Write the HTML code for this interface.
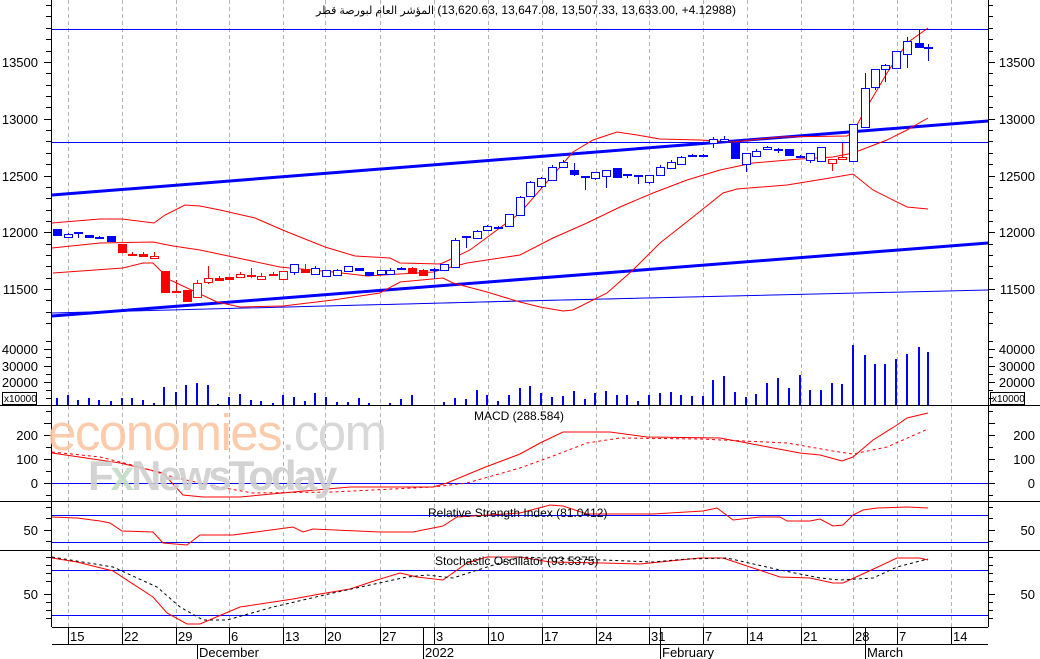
<!DOCTYPE html>
<html><head><meta charset="utf-8"><style>
html,body{margin:0;padding:0;background:#fff;}
body{width:1040px;height:659px;overflow:hidden;position:relative;font-family:"Liberation Sans","Noto Sans CJK SC",sans-serif;}
svg{position:absolute;left:0;top:0;}
.wm{position:absolute;font-family:"Liberation Sans",sans-serif;white-space:nowrap;}
</style></head><body>
<svg width="1040" height="659" viewBox="0 0 1040 659" font-family="Liberation Sans, sans-serif">
<g stroke="#b4b4b4" stroke-dasharray="4,3" stroke-width="1">
<path d="M68.5 0V627M122.5 0V627M176.5 0V627M229.5 0V627M283.5 0V627M325.5 0V627M380.5 0V627M434.5 0V627M488.5 0V627M542.5 0V627M596.5 0V627M649.5 0V627M703.5 0V627M747.5 0V627M801.5 0V627M853.5 0V627M897.5 0V627M951.5 0V627"/>
</g>
<g stroke="#0000ff" stroke-width="1">
<path d="M52 29.5H988M52 142.5H988"/>
<path d="M52 313L520 301L988 290"/>
<path d="M52 483.5H988M52 515.5H988M52 542.5H988M52 570.5H988M52 615.5H988"/>
</g>
<g stroke="#0000ff" stroke-width="3">
<path d="M52 195L988 121"/>
<path d="M52 316L988 243"/>
</g>
<g fill="none" stroke="#ff0000" stroke-width="1">
<polyline points="52,223 100,219 122,219 154,223 165,215 185,205 200,206 220,210 255,218 285,231 325,247 355,256 390,258 400,263 440,264 445,262 470,250 520,213 573,152 593,140 617,132 637,135 660,139 700,140 733,142 780,137 847,136 853,132 867,107 887,73 907,43 928,28"/>
<polyline points="52,248 100,243 153,242 173,246 200,250 233,257 280,267 333,272 367,276 433,272 467,263 520,255 553,238 587,223 620,207 653,193 687,180 720,170 753,163 800,159 833,157 853,153 887,140 907,130 928,118"/>
<polyline points="53,273 123,268 143,263 153,263 170,280 217,302 240,307 283,306 333,300 380,293 400,282 443,278 453,283 487,292 520,302 540,307 563,311 573,310 607,293 633,270 660,243 693,217 723,193 737,189 787,185 830,178 853,174 873,190 907,207 928,209"/>
</g>
<g stroke-width="1" shape-rendering="crispEdges">
<g stroke="#0000ff" fill="#0000ff">
<path d="M57.5 229V235M68.5 233V238M78.5 232V238M89.5 235V237M99.5 236V238M111.5 236V241M294.5 264V275M315.5 266V274M326.5 270V277M337.5 269V276M348.5 266V271M359.5 268V270M369.5 272V275M381.5 270V275M390.5 268V274M401.5 267V269M434.5 268V279M444.5 264V270M455.5 238V268M466.5 236V248M477.5 230V239M487.5 225V231M498.5 226V228M509.5 214V227M520.5 196V216M530.5 181V197M541.5 177V188M552.5 165V181M563.5 160V168M574.5 163V176M585.5 176V190M595.5 172V180M606.5 170V188M617.5 168V177M627.5 174V178M638.5 175V184M649.5 175V184M660.5 165V176M671.5 160V169M681.5 156V165M692.5 154V156M703.5 154V156M713.5 137V148M724.5 136V143M735.5 143V159M746.5 153V172M756.5 149V157M767.5 146V150M778.5 148V153M789.5 149V155M800.5 155V157M810.5 153V163M821.5 147V162M853.5 124V162M865.5 73V128M875.5 69V90M885.5 64V82M896.5 51V69M907.5 37V68M919.5 29V47M928.5 44V61" fill="none"/>
<rect x="53.5" y="229.5" width="8" height="6"/>
<rect x="74.5" y="232.5" width="8" height="1"/>
<rect x="85.5" y="235.5" width="8" height="2"/>
<rect x="95.5" y="237.5" width="8" height="1"/>
<rect x="107.5" y="236.5" width="8" height="5"/>
<rect x="355.5" y="268.5" width="8" height="2"/>
<rect x="365.5" y="272.5" width="8" height="3"/>
<rect x="397.5" y="268.5" width="8" height="1"/>
<rect x="430.5" y="269.5" width="8" height="1"/>
<rect x="462.5" y="236.5" width="8" height="1"/>
<rect x="494.5" y="227.5" width="8" height="1"/>
<rect x="570.5" y="170.5" width="8" height="4"/>
<rect x="581.5" y="176.5" width="8" height="1"/>
<rect x="613.5" y="168.5" width="8" height="9"/>
<rect x="623.5" y="174.5" width="8" height="1"/>
<rect x="634.5" y="175.5" width="8" height="1"/>
<rect x="688.5" y="155.5" width="8" height="1"/>
<rect x="699.5" y="155.5" width="8" height="1"/>
<rect x="731.5" y="143.5" width="8" height="15"/>
<rect x="774.5" y="149.5" width="8" height="1"/>
<rect x="785.5" y="149.5" width="8" height="6"/>
<rect x="796.5" y="156.5" width="8" height="1"/>
<rect x="915.5" y="43.5" width="8" height="4"/>
<rect x="924.5" y="47.5" width="8" height="1"/>
</g>
<g stroke="#0000ff" fill="#fff">
<rect x="64.5" y="234.5" width="8" height="3"/>
<rect x="290.5" y="264.5" width="8" height="8"/>
<rect x="311.5" y="268.5" width="8" height="6"/>
<rect x="322.5" y="270.5" width="8" height="6"/>
<rect x="333.5" y="270.5" width="8" height="5"/>
<rect x="344.5" y="266.5" width="8" height="5"/>
<rect x="377.5" y="270.5" width="8" height="4"/>
<rect x="386.5" y="270.5" width="8" height="4"/>
<rect x="440.5" y="264.5" width="8" height="6"/>
<rect x="451.5" y="240.5" width="8" height="27"/>
<rect x="473.5" y="231.5" width="8" height="7"/>
<rect x="483.5" y="226.5" width="8" height="4"/>
<rect x="505.5" y="214.5" width="8" height="12"/>
<rect x="516.5" y="197.5" width="8" height="18"/>
<rect x="526.5" y="182.5" width="8" height="14"/>
<rect x="537.5" y="178.5" width="8" height="8"/>
<rect x="548.5" y="167.5" width="8" height="13"/>
<rect x="559.5" y="162.5" width="8" height="5"/>
<rect x="591.5" y="172.5" width="8" height="6"/>
<rect x="602.5" y="170.5" width="8" height="6"/>
<rect x="645.5" y="175.5" width="8" height="7"/>
<rect x="656.5" y="167.5" width="8" height="8"/>
<rect x="667.5" y="162.5" width="8" height="6"/>
<rect x="677.5" y="157.5" width="8" height="7"/>
<rect x="709.5" y="139.5" width="8" height="4"/>
<rect x="720.5" y="139.5" width="8" height="2"/>
<rect x="742.5" y="153.5" width="8" height="11"/>
<rect x="752.5" y="151.5" width="8" height="5"/>
<rect x="763.5" y="147.5" width="8" height="2"/>
<rect x="806.5" y="153.5" width="8" height="7"/>
<rect x="817.5" y="147.5" width="8" height="14"/>
<rect x="849.5" y="124.5" width="8" height="37"/>
<rect x="861.5" y="88.5" width="8" height="39"/>
<rect x="871.5" y="69.5" width="8" height="18"/>
<rect x="881.5" y="65.5" width="8" height="4"/>
<rect x="892.5" y="51.5" width="8" height="17"/>
<rect x="903.5" y="41.5" width="8" height="13"/>
</g>
<g stroke="#ff0000" fill="#ff0000">
<path d="M122.5 244V253M132.5 252V255M143.5 252V256M154.5 252V258M165.5 271V293M176.5 280V292M187.5 290V301M197.5 280V298M208.5 266V284M219.5 276V280M229.5 277V279M240.5 272V277M251.5 268V278M261.5 273V279M273.5 272V275M283.5 271V279M305.5 264V272M412.5 267V273M423.5 269V275M832.5 159V171M842.5 143V159" fill="none"/>
<rect x="118.5" y="244.5" width="8" height="8"/>
<rect x="128.5" y="254.5" width="8" height="1"/>
<rect x="139.5" y="254.5" width="8" height="2"/>
<rect x="161.5" y="271.5" width="8" height="21"/>
<rect x="172.5" y="291.5" width="8" height="1"/>
<rect x="183.5" y="290.5" width="8" height="11"/>
<rect x="215.5" y="278.5" width="8" height="2"/>
<rect x="225.5" y="277.5" width="8" height="2"/>
<rect x="247.5" y="275.5" width="8" height="1"/>
<rect x="269.5" y="274.5" width="8" height="1"/>
<rect x="301.5" y="269.5" width="8" height="3"/>
<rect x="408.5" y="268.5" width="8" height="5"/>
<rect x="419.5" y="270.5" width="8" height="5"/>
</g>
<g stroke="#ff0000" fill="#fff">
<rect x="150.5" y="256.5" width="8" height="2"/>
<rect x="193.5" y="283.5" width="8" height="14"/>
<rect x="204.5" y="278.5" width="8" height="4"/>
<rect x="236.5" y="274.5" width="8" height="3"/>
<rect x="257.5" y="276.5" width="8" height="3"/>
<rect x="279.5" y="271.5" width="8" height="8"/>
<rect x="828.5" y="159.5" width="8" height="4"/>
<rect x="838.5" y="157.5" width="8" height="2"/>
</g>
</g>
<path stroke="#0000ff" stroke-width="2" d="M57 405V398M68 405V395M78 405V400M89 405V398M99 405V400M111 405V401M122 405V398M132 405V398M143 405V400M154 405V403M164 405V387M176 405V392M186 405V385M197 405V383M208 405V385M218 405V404M229 405V397M240 405V394M251 405V400M261 405V401M273 405V403M283 405V395M294 405V397M305 405V401M315 405V393M326 405V397M337 405V402M348 405V402M359 405V398M369 405V403M390 405V403M401 405V399M412 405V395M444 405V402M455 405V398M466 405V399M477 405V390M487 405V395M498 405V401M509 405V395M520 405V388M530 405V386M541 405V393M552 405V397M563 405V396M574 405V391M585 405V399M595 405V393M606 405V391M617 405V395M627 405V395M638 405V401M649 405V395M660 405V393M671 405V392M681 405V395M692 405V396M703 405V396M713 405V380M724 405V376M735 405V392M746 405V397M756 405V394M767 405V383M778 405V378M789 405V388M800 405V375M810 405V390M821 405V390M832 405V383M842 405V384M853 405V345M865 405V355M875 405V364M885 405V364M896 405V359M907 405V354M919 405V347M928 405V352"/>
<g fill="none" stroke="#ff0000" stroke-width="1">
<polyline points="52,453 120,463 163,473 183,495 203,497 240,497 293,492 350,487 433,487 447,483 483,468 520,454 540,443 563,432 610,432 647,437 720,438 747,443 800,453 820,455 842,461 853,457 873,440 897,425 907,418 928,413"/>
<polyline stroke-dasharray="3,3" points="52,452 100,457 140,467 173,477 213,486 253,493 333,492 433,487 467,483 520,468 553,456 587,443 620,438 700,439 787,443 833,451 853,454 887,447 928,429"/>
<polyline points="52,517 77,518 100,521 110,523 122,531 153,532 163,543 187,545 200,535 233,535 293,527 303,532 313,529 380,532 413,532 443,526 457,517 520,513 550,505 563,506 587,514 653,514 703,511 717,508 733,520 760,517 780,517 787,521 810,521 820,519 833,526 843,525 853,515 863,510 877,508 907,507 928,508"/>
<polyline points="52,558 77,562 113,571 153,597 167,613 187,624 200,624 240,607 293,599 320,594 350,589 377,580 400,573 417,577 443,580 467,563 487,557 520,557 550,562 603,563 640,564 700,558 723,558 753,568 780,577 810,578 833,583 843,583 867,572 897,558 920,558 928,560"/>
</g>
<polyline fill="none" stroke="#000" stroke-width="1" stroke-dasharray="3,3" points="52,557 113,567 157,587 180,607 203,620 227,620 273,607 333,593 407,577 427,575 453,578 487,567 520,557 603,560 653,562 687,559 727,558 780,570 820,578 840,580 873,578 897,567 928,559"/>
<g stroke="#000" stroke-width="1" fill="none">
<path d="M51.5 0V627M988.5 0V627"/>
<path d="M0 405.5H1040M0 501.5H1040M0 550.5H1040M52 627.5H988M52 644.5H988"/>
<path d="M68.5 627V644M122.5 627V644M176.5 627V644M229.5 627V644M283.5 627V644M325.5 627V644M380.5 627V644M434.5 627V644M488.5 627V644M542.5 627V644M596.5 627V644M649.5 627V644M703.5 627V644M747.5 627V644M801.5 627V644M853.5 627V644M897.5 627V644M951.5 627V644"/>
<path d="M197.5 644V659M423.5 627V659M660.5 627V659M865.5 627V659"/>
<path d="M46 5.5h5M46 16.5h5M46 28.5h5M46 39.5h5M46 51.5h5M44 62.5h7M46 73.5h5M46 85.5h5M46 96.5h5M46 107.5h5M44 119.5h7M46 130.5h5M46 141.5h5M46 153.5h5M46 164.5h5M44 176.5h7M46 187.5h5M46 198.5h5M46 210.5h5M46 221.5h5M44 232.5h7M46 244.5h5M46 255.5h5M46 266.5h5M46 278.5h5M44 289.5h7M46 300.5h5M46 312.5h5M46 323.5h5M46 341.5h5M44 349.5h7M46 357.5h5M44 366.5h7M46 374.5h5M44 382.5h7M46 390.5h5M46 398.5h5M46 411.5h5M44 423.5h7M44 435.5h7M46 447.5h5M44 459.5h7M46 471.5h5M44 483.5h7M46 495.5h5M46 507.5h5M46 518.5h5M44 530.5h7M46 541.5h5M46 557.5h5M46 565.5h5M46 573.5h5M46 581.5h5M44 594.5h7M46 602.5h5M46 610.5h5M46 618.5h5"/>
<path d="M988 5.5h5M988 16.5h5M988 28.5h5M988 39.5h5M988 51.5h5M988 62.5h7M988 73.5h5M988 85.5h5M988 96.5h5M988 107.5h5M988 119.5h7M988 130.5h5M988 141.5h5M988 153.5h5M988 164.5h5M988 176.5h7M988 187.5h5M988 198.5h5M988 210.5h5M988 221.5h5M988 232.5h7M988 244.5h5M988 255.5h5M988 266.5h5M988 278.5h5M988 289.5h7M988 300.5h5M988 312.5h5M988 323.5h5M988 341.5h5M988 349.5h7M988 357.5h5M988 366.5h7M988 374.5h5M988 382.5h7M988 390.5h5M988 398.5h5M988 411.5h5M988 423.5h7M988 435.5h7M988 447.5h5M988 459.5h7M988 471.5h5M988 483.5h7M988 495.5h5M988 507.5h5M988 518.5h5M988 530.5h7M988 541.5h5M988 557.5h5M988 565.5h5M988 573.5h5M988 581.5h5M988 594.5h7M988 602.5h5M988 610.5h5M988 618.5h5"/>
<rect x="2.5" y="392.5" width="34" height="12"/>
<rect x="990.5" y="392.5" width="34" height="12"/>
</g>
<g font-size="13" fill="#000" text-anchor="end">
<text x="38" y="67">13500</text><text x="38" y="124">13000</text><text x="38" y="181">12500</text><text x="38" y="237">12000</text><text x="38" y="294">11500</text>
<text x="38" y="354">40000</text><text x="38" y="371">30000</text><text x="38" y="387">20000</text>
<text x="38" y="440">200</text><text x="38" y="464">100</text><text x="38" y="488">0</text>
<text x="38" y="535">50</text><text x="38" y="599">50</text>
<text x="1035" y="67">13500</text><text x="1035" y="124">13000</text><text x="1035" y="181">12500</text><text x="1035" y="237">12000</text><text x="1035" y="294">11500</text>
<text x="1035" y="354">40000</text><text x="1035" y="371">30000</text><text x="1035" y="387">20000</text>
<text x="1035" y="440">200</text><text x="1035" y="464">100</text><text x="1035" y="488">0</text>
<text x="1035" y="535">50</text><text x="1035" y="599">50</text>
</g>
<g font-size="10" fill="#000"><text x="4" y="402">x10000</text><text x="992" y="402">x10000</text></g>
<g font-size="13" fill="#000">
<text x="70" y="641">15</text><text x="124" y="641">22</text><text x="178" y="641">29</text><text x="231" y="641">6</text><text x="285" y="641">13</text><text x="327" y="641">20</text><text x="382" y="641">27</text><text x="436" y="641">3</text><text x="490" y="641">10</text><text x="544" y="641">17</text><text x="598" y="641">24</text><text x="651" y="641">31</text><text x="705" y="641">7</text><text x="749" y="641">14</text><text x="803" y="641">21</text><text x="855" y="641">28</text><text x="899" y="641">7</text><text x="953" y="641">14</text>
<text x="199" y="657">December</text><text x="425" y="657">2022</text><text x="662" y="657">February</text><text x="867" y="657">March</text>
</g>
<g font-size="12" fill="#000">
<text x="474" y="420">MACD (288.584)</text>
<text x="428" y="517">Relative Strength Index (81.0412)</text>
<text x="435" y="565">Stochastic Oscillator (93.5375)</text>
</g>
</svg>
<div style="position:absolute;left:316px;top:3px;font-size:12px;letter-spacing:-0.3px;font-family:'Liberation Sans','DejaVu Sans',sans-serif;white-space:nowrap;direction:ltr;unicode-bidi:isolate"><span dir="rtl" style="unicode-bidi:isolate;font-size:11px">المؤشر العام لبورصة قطر</span> (13,620.63, 13,647.08, 13,507.33, 13,633.00, +4.12988)</div>
<div class="wm" style="left:48px;top:403px;font-size:51px;letter-spacing:-1.5px;opacity:0.9"><span style="color:#fcc6a2">economies</span><span style="color:#d4d4d4">.com</span></div>
<div class="wm" style="left:88px;top:452px;font-size:42px;font-weight:bold;letter-spacing:-3px;color:#cfcfcf;opacity:0.9">F<span style="color:#c4dcc4">x</span>NewsToday</div>
</body></html>
